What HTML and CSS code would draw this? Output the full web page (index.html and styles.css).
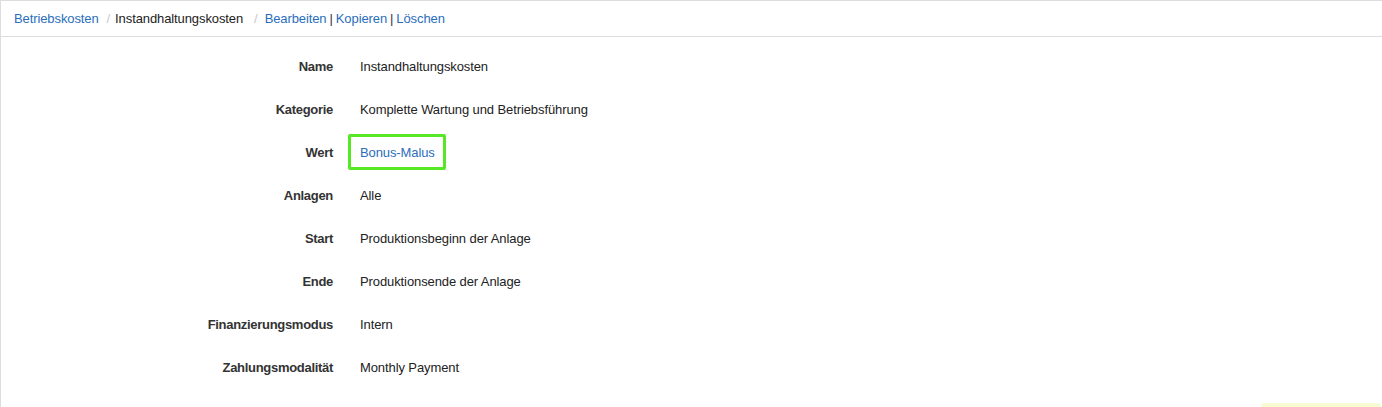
FILE: index.html
```html
<!DOCTYPE html>
<html lang="de">
<head>
<meta charset="utf-8">
<title>Instandhaltungskosten</title>
<link rel="stylesheet" href="styles.css">
</head>
<body>
<div class="panel">
  <div class="panel-header">
    <a class="link" href="#">Betriebskosten</a>
    <span class="sep">/</span>
    <span class="current">Instandhaltungskosten</span>
    <span class="sep sep-2">/</span>
    <a class="link" href="#">Bearbeiten</a>
    <span class="pipe">|</span>
    <a class="link" href="#">Kopieren</a>
    <span class="pipe">|</span>
    <a class="link" href="#">Löschen</a>
  </div>
  <dl class="details">
    <dt>Name</dt><dd>Instandhaltungskosten</dd>
    <dt>Kategorie</dt><dd>Komplette Wartung und Betriebsführung</dd>
    <dt>Wert</dt><dd><a class="link highlight" href="#">Bonus-Malus</a></dd>
    <dt>Anlagen</dt><dd>Alle</dd>
    <dt>Start</dt><dd>Produktionsbeginn der Anlage</dd>
    <dt>Ende</dt><dd>Produktionsende der Anlage</dd>
    <dt>Finanzierungsmodus</dt><dd>Intern</dd>
    <dt>Zahlungsmodalität</dt><dd>Monthly Payment</dd>
  </dl>
</div>
<div class="toast"></div>
</body>
</html>
```
FILE: styles.css
```css
html, body {
  margin: 0;
  padding: 0;
  background: #fff;
}
body {
  font-family: "Liberation Sans", Arial, Helvetica, sans-serif;
  font-size: 13px;
  letter-spacing: -0.1px;
  color: #333;
  height: 407px;
  overflow: hidden;
}
.panel {
  border-top: 1px solid #ddd;
  border-left: 1px solid #ddd;
  min-height: 406px;
}
.panel-header {
  height: 35px;
  border-bottom: 1px solid #ddd;
  display: flex;
  align-items: center;
  padding-left: 13px;
  line-height: 15px;
}
.link {
  color: #2a6ebb;
  text-decoration: none;
}
.sep {
  color: #c8c8c8;
  margin: 0 5px 0 8px;
}
.sep-2 {
  margin: 0 7px 0 11px;
}
.current {
  color: #222;
}
.pipe {
  color: #333;
  margin: 0 3px;
}
.details {
  display: grid;
  grid-template-columns: 332px 1fr;
  column-gap: 27px;
  grid-auto-rows: 43px;
  align-items: center;
  margin: 0;
  padding-top: 8px;
}
.details dt {
  font-weight: bold;
  text-align: right;
  letter-spacing: -0.3px;
  color: #333;
  line-height: 15px;
}
.details dd {
  margin: 0;
  line-height: 15px;
  color: #222;
}
.highlight {
  display: inline-block;
  border: 3px solid #56e825;
  border-radius: 2px;
  padding: 8px 8px 7px 9px;
  margin: -11px -12px;
}
.toast {
  position: fixed;
  right: 1px;
  bottom: -4px;
  width: 120px;
  height: 8px;
  border-radius: 4px;
  background: #f8fbd2;
}
```
